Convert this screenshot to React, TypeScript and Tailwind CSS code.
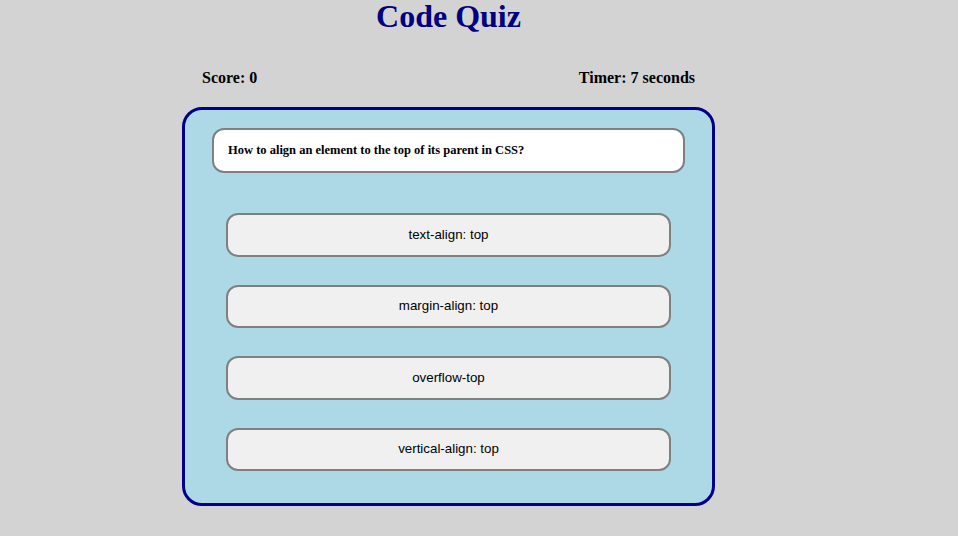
const answers = [
  "text-align: top",
  "margin-align: top",
  "overflow-top",
  "vertical-align: top",
];

export default function App() {
  const score = 0;
  const timer = 7;

  return (
    <div className="min-h-[536px] w-full bg-[#d3d3d3] font-['Liberation_Serif',serif]">
      <div className="ml-[182px] flex w-[533px] flex-col">
        <h1 className="m-0 text-center text-[32px] font-bold leading-[33px] text-[#000080]">
          Code Quiz
        </h1>

        <div className="mt-[36px] flex justify-between px-5 text-[16px] font-bold leading-[18px] text-black">
          <span>Score: {score}</span>
          <span>Timer: {timer} seconds</span>
        </div>

        <div className="mt-[20px] flex flex-col rounded-[20px] border-[3px] border-[#00008b] bg-[#add8e6] px-[27px] pb-[32px] pt-[18px]">
          <div className="flex h-[45px] items-center rounded-[12px] border-2 border-[#808080] bg-white pl-[14px] text-[12.5px] font-bold text-black">
            How to align an element to the top of its parent in CSS?
          </div>

          <div className="mt-[40px] flex flex-col gap-[28px] px-[14px]">
            {answers.map((answer) => (
              <button
                key={answer}
                className="h-[43.5px] rounded-[12px] border-2 border-[#808080] bg-[#f0f0f0] font-['Liberation_Sans',Arial,sans-serif] text-[13.33px] text-black"
              >
                {answer}
              </button>
            ))}
          </div>
        </div>
      </div>
    </div>
  );
}
